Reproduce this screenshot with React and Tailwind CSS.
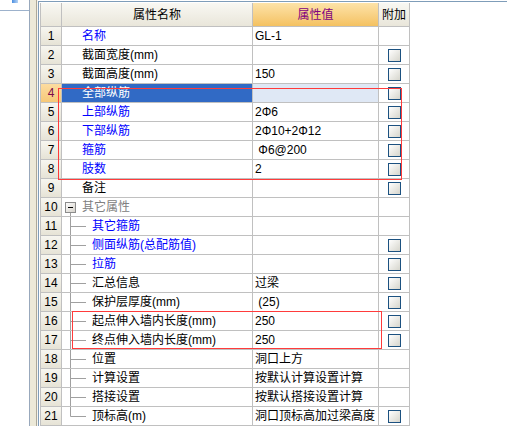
import React from 'react';

const BLUE = 'text-[#0000ff]';
const BLACK = 'text-black';

const rows = [
  { name: '名称', color: BLUE, value: 'GL-1', check: false },
  { name: '截面宽度(mm)', color: BLACK, value: '', check: true },
  { name: '截面高度(mm)', color: BLACK, value: '150', check: true },
  { name: '全部纵筋', color: BLACK, value: '', check: true, selected: true },
  { name: '上部纵筋', color: BLUE, value: '2Φ6', check: true },
  { name: '下部纵筋', color: BLUE, value: '2Φ10+2Φ12', check: true },
  { name: '箍筋', color: BLUE, value: ' Φ6@200', check: true },
  { name: '肢数', color: BLUE, value: '2', check: true },
  { name: '备注', color: BLACK, value: '', check: true },
  { name: '其它属性', color: 'text-[#808080]', value: '', check: false, group: true },
  { name: '其它箍筋', color: BLUE, value: '', check: false, tree: true },
  { name: '侧面纵筋(总配筋值)', color: BLUE, value: '', check: true, tree: true },
  { name: '拉筋', color: BLUE, value: '', check: true, tree: true },
  { name: '汇总信息', color: BLACK, value: '过梁', check: true, tree: true },
  { name: '保护层厚度(mm)', color: BLACK, value: ' (25)', check: true, tree: true },
  { name: '起点伸入墙内长度(mm)', color: BLACK, value: '250', check: true, tree: true },
  { name: '终点伸入墙内长度(mm)', color: BLACK, value: '250', check: true, tree: true },
  { name: '位置', color: BLACK, value: '洞口上方', check: false, tree: true },
  { name: '计算设置', color: BLACK, value: '按默认计算设置计算', check: false, tree: true },
  { name: '搭接设置', color: BLACK, value: '按默认搭接设置计算', check: false, tree: true },
  { name: '顶标高(m)', color: BLACK, value: '洞口顶标高加过梁高度', check: true, tree: true, last: true },
];

const Checkbox = () => (
  <div className="w-[13px] h-[13px] border border-[#1c5180] bg-gradient-to-br from-white to-[#d6d5cc]" />
);

// tree connectors, drawn per cell
const TreeLine = ({ last }) => (
  <svg width="30" height="18" className="shrink-0">
    <line x1="8.5" y1="0" x2="8.5" y2={last ? 9.5 : 18} stroke="#a0a0a0" />
    <line x1="8.5" y1="9.5" x2="24" y2="9.5" stroke="#a0a0a0" />
  </svg>
);

const Collapse = () => (
  <svg width="20" height="18" className="shrink-0">
    <defs>
      <linearGradient id="bx" x1="0" y1="0" x2="1" y2="1">
        <stop offset="0" stopColor="#ffffff" />
        <stop offset="1" stopColor="#d4d0c8" />
      </linearGradient>
    </defs>
    <rect x="3.5" y="4.5" width="10" height="10" fill="url(#bx)" stroke="#8c8c8c" />
    <line x1="6" y1="9.5" x2="11" y2="9.5" stroke="#000" />
    <line x1="8.5" y1="15" x2="8.5" y2="18" stroke="#a0a0a0" />
  </svg>
);

const Row = ({ r, i }) => (
  <div className="flex h-[19px] border-b border-[#c0c0c0]">
    <div
      className={`w-[21px] shrink-0 border-r border-[#c0c0c0] flex items-center justify-center ${
        r.selected
          ? 'bg-gradient-to-b from-[#fcdca0] to-[#f6c878] text-[#7b0a4a]'
          : 'bg-gradient-to-b from-[#f7f6f0] to-[#e6e3d6] text-black'
      }`}
    >
      {i + 1}
    </div>
    <div
      className={`w-[191px] shrink-0 border-r border-[#c0c0c0] flex items-center whitespace-nowrap ${
        r.selected ? 'bg-[#316ac5] text-white pl-[20px]' : `${r.color} ${r.tree || r.group ? '' : 'pl-[20px]'}`
      }`}
    >
      {r.group && <Collapse />}
      {r.tree && <TreeLine last={r.last} />}
      <span>{r.name}</span>
    </div>
    <div
      className={`w-[126px] shrink-0 border-r border-[#c0c0c0] flex items-center pl-[2px] whitespace-pre text-black ${
        r.selected ? 'bg-[#dfe8f5]' : ''
      }`}
    >
      {r.value}
    </div>
    <div className="w-[31px] shrink-0 border-r border-[#c0c0c0] flex items-center justify-center pl-px">
      {r.check && <Checkbox />}
    </div>
  </div>
);

export default function App() {
  return (
    <div
      className="relative flex w-[507px] h-[426px] overflow-hidden bg-white text-[12px] leading-[18px]"
      style={{ fontFamily: '"Liberation Sans", "Noto Sans CJK SC", sans-serif' }}
    >
      {/* left dock */}
      <div className="w-[29px] shrink-0 flex flex-col">
        <div className="h-[11px] border-b border-[#9db2cc] relative">
          <div className="ml-[12px] w-[6px] h-[3px] bg-gradient-to-r from-[#4b8fe0] to-[#b8d4f4]" />
        </div>
      </div>
      <div className="w-px shrink-0 bg-[#98a8bc]" />
      <div className="w-[6px] shrink-0 bg-[#ece9d8]" />
      <div className="w-px shrink-0 bg-[#aca899]" />
      <div className="w-px shrink-0 bg-[#f6f5f0]" />

      {/* property grid */}
      <div className="flex-1 mt-px border-l border-t border-[#7f9db9] pl-px pt-px">
        <div className="w-[370px] border-l border-[#c0c0c0]">
          <div className="flex h-[24px] border-b border-[#c0c0c0]">
            <div className="w-[21px] shrink-0 border-r border-[#c0c0c0] bg-gradient-to-b from-[#f9f8f3] to-[#e9e6da]" />
            <div className="w-[191px] shrink-0 border-r border-[#c0c0c0] bg-gradient-to-b from-[#f9f8f3] to-[#e9e6da] flex items-center justify-center text-black">
              属性名称
            </div>
            <div className="w-[126px] shrink-0 border-r border-[#c0c0c0] bg-gradient-to-b from-[#fde3a8] to-[#f4c160] flex items-center justify-center text-[#800080]">
              属性值
            </div>
            <div className="w-[31px] shrink-0 border-r border-[#c0c0c0] bg-gradient-to-b from-[#f9f8f3] to-[#e9e6da] flex items-center justify-center text-black">
              附加
            </div>
          </div>
          {rows.map((r, i) => (
            <Row key={i} r={r} i={i} />
          ))}
        </div>
      </div>

      {/* red highlight boxes */}
      <div className="absolute left-[58px] top-[88px] w-[344px] h-[92px] border border-[#ff3b3b]" />
      <div className="absolute left-[72px] top-[311px] w-[310px] h-[38px] border border-[#ff3b3b]" />
    </div>
  );
}
